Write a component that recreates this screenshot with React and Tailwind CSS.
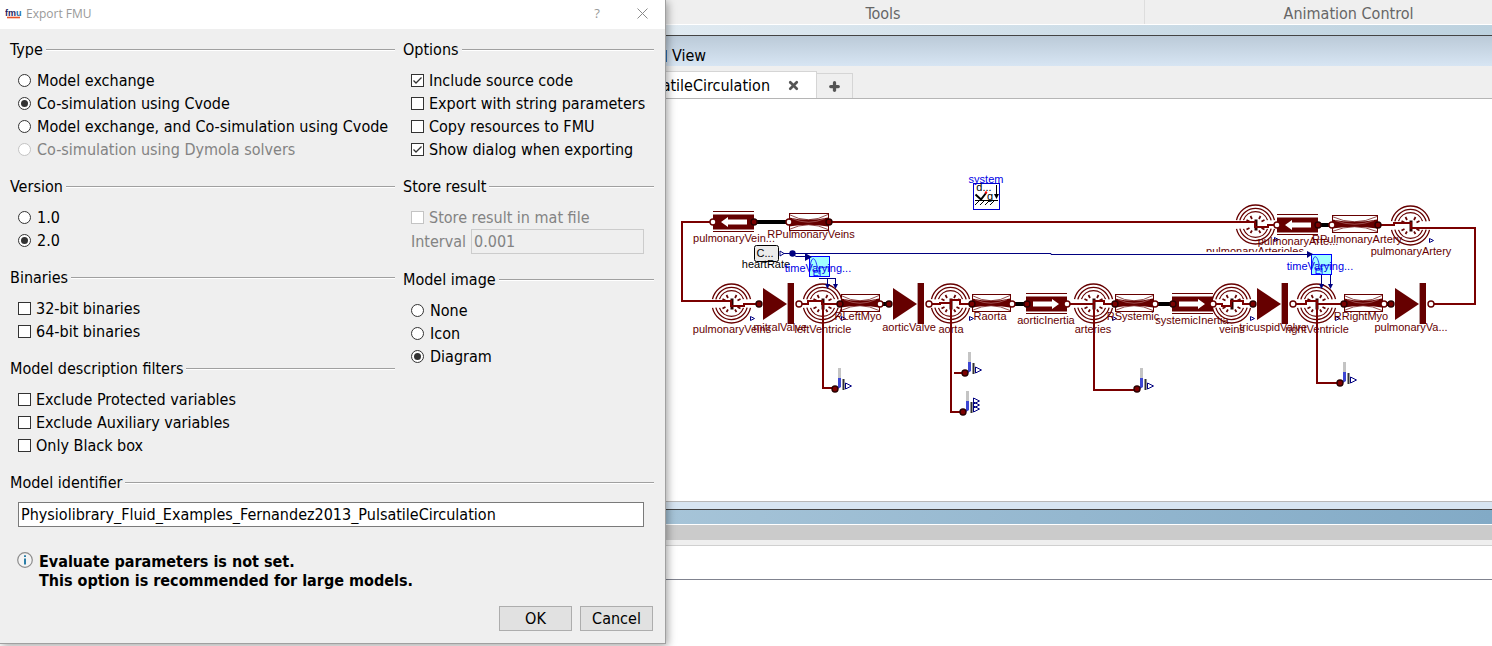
import { useId } from 'react';
import { X, Plus } from 'lucide-react';

const RED = '#660000';
const WIRE = '#7a0000';
const NAVY = '#000080';

/* ---------- dialog controls ---------- */

function Group({ title, children, className = '' }) {
  return (
    <fieldset className={`min-w-0 ${className}`}>
      <legend className="flex w-full items-center gap-[3px] h-[23px]">
        <span>{title}</span>
        <span className="h-[2px] flex-1 border-t border-[#a0a0a0] bg-white" />
      </legend>
      <div className="mt-2 pl-2">{children}</div>
    </fieldset>
  );
}

function Radio({ name, label, checked = false, disabled = false }) {
  const id = useId();
  return (
    <div className="flex h-[23px] items-center gap-[6px]">
      <input
        id={id}
        type="radio"
        name={name}
        defaultChecked={checked}
        disabled={disabled}
        className="flex h-[13px] w-[13px] shrink-0 appearance-none items-center justify-center rounded-full border border-[#333333] bg-white before:h-[7px] before:w-[7px] before:rounded-full checked:before:bg-[#333333] disabled:border-[#c4c4c4]"
      />
      <label htmlFor={id} className={disabled ? 'text-[#838383]' : ''}>{label}</label>
    </div>
  );
}

function CheckBox({ label, checked = false, disabled = false }) {
  const id = useId();
  return (
    <div className="flex h-[23px] items-center gap-[5px]">
      <span className="relative h-[13px] w-[13px] shrink-0">
        <input
          id={id}
          type="checkbox"
          defaultChecked={checked}
          disabled={disabled}
          className="peer block h-[13px] w-[13px] appearance-none border border-[#333333] bg-white disabled:border-[#c4c4c4]"
        />
        <svg viewBox="0 0 13 13" className="pointer-events-none absolute inset-0 hidden peer-checked:block">
          <path d="M2.5 6.5 L5 9 L10.5 3.5" fill="none" stroke="#333333" strokeWidth="1.3" />
        </svg>
      </span>
      <label htmlFor={id} className={disabled ? 'text-[#838383]' : ''}>{label}</label>
    </div>
  );
}

function TitleBar() {
  return (
    <header className="flex h-[29px] items-center bg-white pb-[2px] pl-[5px] font-['Open_Sans',sans-serif] text-[12px] text-[#999999]">
      <svg width="17" height="12" viewBox="0 0 17 12" className="mr-1">
        <text x="0" y="8" fontFamily="Liberation Sans, Arial, sans-serif" fontWeight="bold" fontSize="9" fill="#1f1a5e">
          fm<tspan fill="#1c6ea8">u</tspan>
        </text>
        <path d="M2 9.5 H15" stroke="#e8532a" strokeWidth="1.6" />
      </svg>
      <h1 className="flex-1">Export FMU</h1>
      <button type="button" aria-label="Help" className="w-[46px] text-center text-[13px]">?</button>
      <button type="button" aria-label="Close" className="flex w-[45px] justify-center">
        <svg width="11" height="11" viewBox="0 0 11 11">
          <path d="M0.5 0.5 L10.5 10.5 M10.5 0.5 L0.5 10.5" stroke="#8a8a8a" />
        </svg>
      </button>
    </header>
  );
}

function ExportDialog() {
  return (
    <form
      onSubmit={(e) => e.preventDefault()}
      className="relative z-10 w-[666px] shrink-0 self-start whitespace-nowrap border-r border-b border-[#a0a0a0] bg-[#efefef] shadow-[2px_2px_8px_rgba(0,0,0,0.35)]"
    >
      <TitleBar />
      <div className="pt-[9px] pr-[11px] pb-3 pl-[10px]">
        <div className="flex gap-2">
          <div className="flex w-[385px] shrink-0 flex-col gap-[14px]">
            <Group title="Type">
              <Radio name="type" label="Model exchange" />
              <Radio name="type" label="Co-simulation using Cvode" checked />
              <Radio name="type" label="Model exchange, and Co-simulation using Cvode" />
              <Radio name="type" label="Co-simulation using Dymola solvers" disabled />
            </Group>
            <Group title="Version">
              <Radio name="version" label="1.0" />
              <Radio name="version" label="2.0" checked />
            </Group>
            <Group title="Binaries">
              <CheckBox label="32-bit binaries" />
              <CheckBox label="64-bit binaries" />
            </Group>
            <Group title="Model description filters">
              <CheckBox label="Exclude Protected variables" />
              <CheckBox label="Exclude Auxiliary variables" />
              <CheckBox label="Only Black box" />
            </Group>
          </div>
          <div className="flex min-w-0 flex-1 flex-col gap-[14px]">
            <Group title="Options">
              <CheckBox label="Include source code" checked />
              <CheckBox label="Export with string parameters" />
              <CheckBox label="Copy resources to FMU" />
              <CheckBox label="Show dialog when exporting" checked />
            </Group>
            <Group title="Store result">
              <CheckBox label="Store result in mat file" disabled />
              <div className="mr-[10px] flex items-center text-[#838383]">
                <label htmlFor="interval" className="w-[60px]">Interval</label>
                <input
                  id="interval"
                  disabled
                  defaultValue="0.001"
                  className="h-[25px] min-w-0 flex-1 border border-[#cccccc] px-[2px]"
                />
              </div>
            </Group>
            <Group title="Model image">
              <Radio name="image" label="None" />
              <Radio name="image" label="Icon" />
              <Radio name="image" label="Diagram" checked />
            </Group>
          </div>
        </div>

        <Group title="Model identifier" className="mt-[14px]">
          <div className="pr-[10px]">
            <input
              aria-label="Model identifier"
              defaultValue="Physiolibrary_Fluid_Examples_Fernandez2013_PulsatileCirculation"
              className="block h-[25px] w-full border border-[#7a7a7a] bg-white px-[2px]"
            />
          </div>
        </Group>

        <div className="mt-[25px] flex gap-[6px] pl-[7px]">
          <svg width="16" height="16" viewBox="0 0 16 16" className="shrink-0">
            <circle cx="8" cy="8" r="7.3" fill="#f4f4f4" stroke="#8c8c8c" strokeWidth="1.2" />
            <path d="M7 3.2 H9 V5 H7 Z M7 6.5 H9 V12.5 H7 Z" fill="#2b7fa8" />
          </svg>
          <p className="font-bold leading-[19px]">
            Evaluate parameters is not set.
            <br />
            This option is recommended for large models.
          </p>
        </div>

        <div className="mt-4 flex justify-end gap-2 pr-px">
          <button type="submit" className="h-[25px] w-[73px] border border-[#adadad] bg-[#e1e1e1]">OK</button>
          <button type="button" className="h-[25px] w-[73px] border border-[#adadad] bg-[#e1e1e1]">Cancel</button>
        </div>
      </div>
    </form>
  );
}

/* ---------- diagram symbols ---------- */

function Port({ x, y, solid = false }) {
  return (
    <circle cx={x} cy={y} r="3" fill={solid ? '#7d0000' : '#ffffff'} stroke={solid ? '#2a0000' : RED} strokeWidth="1.4" />
  );
}

function Chamber({ x, y }) {
  // top and bottom halves of the concentric shells
  const shells = [[19.5, 13], [16.2, 15], [12.8, 20]];
  return (
    <g transform={`translate(${x + 0.5} ${y + 0.5})`} fill="none" stroke={RED}>
      {shells.map(([r, a]) => {
        const dx = r * Math.cos((a * Math.PI) / 180);
        const dy = r * Math.sin((a * Math.PI) / 180);
        return (
          <path
            key={r}
            strokeWidth="1.3"
            d={`M${-dx} ${-dy} A${r} ${r} 0 0 1 ${dx} ${-dy} M${-dx} ${dy} A${r} ${r} 0 0 0 ${dx} ${dy}`}
          />
        );
      })}
      <path strokeWidth="1.7" d="M-9 -4.5 L-6 -3 M-5 -8.5 L-3.5 -5.5 M5 -8.5 L3.5 -5.5 M9 -4.5 L6 -3 M-9 5 L-6 3.5 M-5 8.5 L-3.5 6 M5 8.5 L3.5 6 M9 5 L6 3.5" />
      <path stroke="#2a0000" strokeWidth="3" d="M0.5 -5 V6" />
      <path stroke={NAVY} d="M19 13 L23 15 L19 17 Z" />
    </g>
  );
}

function Resistor({ x, y, w = 38 }) {
  const m = w / 2;
  return (
    <g transform={`translate(${x} ${y})`} fill="none" stroke={RED}>
      <rect x="0.5" y="-8.5" width={w} height="17" fill="#ffffff" />
      <path fill={RED} stroke="none" d={`M0 -4.5 Q${m} 0 ${w} -4.5 V4.5 Q${m} 1 0 4.5 Z`} />
      <path strokeWidth="0.7" d={`M0 -7.5 Q${m} 3 ${w} -7.5 M0 7.5 Q${m} -2 ${w} 7.5`} />
      <path stroke="#c08080" strokeWidth="0.6" d={`M3 -3.5 Q${m} 4 ${w - 3} -3.5`} />
    </g>
  );
}

function Inertia({ x, y, left = false }) {
  return (
    <g transform={`translate(${x} ${y})`}>
      <path d="M0 -10.5 H41 M0 9.5 H41" stroke={RED} />
      <rect x="0" y="-7.5" width="41" height="15" fill={RED} />
      <path
        fill="#ffffff"
        d={left ? 'M8 0 L15 -5 V-2.5 H34 V2.5 H15 V5 Z' : 'M33 0 L26 -5 V-2.5 H7 V2.5 H26 V5 Z'}
      />
    </g>
  );
}

function Valve({ x }) {
  return (
    <g transform={`translate(${x} 304)`} fill={RED}>
      <path d="M0 -16 L24 0 L0 16 Z" />
      <rect x="24" y="-21" width="1" height="41" fill="#b89a9a" />
      <rect x="25" y="-21" width="6" height="41" />
    </g>
  );
}

function Sensor({ x, y, outputs = [-3] }) {
  return (
    <g transform={`translate(${x} ${y})`}>
      <rect x="3" y="-21" width="3" height="11" fill="#c4c4c4" />
      <path d="M3 -11 H6 V-2 L3 0 Z" fill="#3c46d2" />
      <path d="M8.5 -10 V1" fill="none" stroke="#333333" strokeWidth="2" />
      {outputs.map((o) => (
        <path key={o} d={`M10.5 ${o - 3} L16.5 ${o} L10.5 ${o + 3} Z`} fill="none" stroke={NAVY} />
      ))}
      <Port x={0} y={0} solid />
    </g>
  );
}

function TimeVarying({ x, y }) {
  return (
    <g transform={`translate(${x} ${y})`} fill="none" stroke="#0000ff">
      <rect x="0.5" y="-0.5" width="20" height="20" fill="#a0ffff" />
      <path strokeWidth="0.8" d="M1 11 C2 -1 6 -1 8 9 C9 13 12 10 19 10 M10 11 V17" />
      <text x="8" y="19" fontSize="9" fill="#0000ff" stroke="none">EI</text>
    </g>
  );
}

const wires = [
  'M713 222 H682 V301 H731 V306 H744 V304 H759',
  'M829 222 H1255 V227 H1268 V225 H1277',
  'M799 304 H808 V301 H822 V304 H840',
  'M823 304 V388 H835',
  'M929 304 H940 V303 H951 V300 H960 V304 H972',
  'M951 304 V412 H963',
  'M954 373 H965',
  'M1067 304 H1094 V301 H1104 V304 H1115',
  'M1094 304 V390 H1137',
  'M1213 304 H1222 V306 H1231 V301 H1243 V304 H1253',
  'M1293 304 H1306 V301 H1317 V304 H1344',
  'M1317 304 V383 H1340',
  'M1378 225 H1394 V223 H1411 V228 H1475 V304 H1431',
];

const chambers = [[731, 303], [822, 303], [950, 303], [1093, 303], [1231, 303], [1316, 303], [1255, 224], [1410, 225]];

const openPorts = [[713, 222], [789, 222], [799, 304], [880, 304], [929, 304], [1012, 304], [1067, 304], [1155, 304], [1213, 304], [1293, 304], [1384, 304], [1431, 304], [1277, 225], [1332, 225]];
const solidPorts = [[754, 222], [829, 222], [759, 304], [840, 304], [889, 304], [972, 304], [1027, 304], [1115, 304], [1173, 304], [1253, 304], [1344, 304], [1391, 304], [1318, 225], [1378, 225]];

const labels = [
  ['pulmonaryVein...', 734, 242],
  ['RPulmonaryVeins', 811, 238],
  ['pulmonaryVeins', 732, 333],
  ['mitralValve', 780, 331],
  ['leftVentricle', 823, 333],
  ['RLeftMyo', 858, 320],
  ['aorticValve', 909, 331],
  ['aorta', 951, 333],
  ['Raorta', 990, 320],
  ['aorticInertia', 1046, 324],
  ['arteries', 1093, 333],
  ['RSystemic', 1133, 320],
  ['systemicInertia', 1192, 324],
  ['veins', 1232, 333],
  ['tricuspidValve', 1273, 331],
  ['rightVentricle', 1317, 333],
  ['RRightMyo', 1361, 320],
  ['pulmonaryVa...', 1411, 331],
  ['pulmonaryArtery', 1411, 255],
  ['RPulmonaryArtery', 1357, 243],
  ['pulmonaryArte...', 1298, 245],
];

function Diagram() {
  return (
    <svg
      viewBox="666 99 826 402"
      preserveAspectRatio="xMinYMin meet"
      className="block w-full"
      fontFamily="Liberation Sans, Arial, sans-serif"
      fontSize="11"
      textAnchor="middle"
    >
      <clipPath id="cut">
        <rect x="1200" y="240" width="110" height="12" />
      </clipPath>

      {chambers.map(([x, y]) => <Chamber key={`${x}-${y}`} x={x} y={y} />)}
      <path d={wires.join(' ')} fill="none" stroke={WIRE} strokeWidth="2" />
      <path
        d="M754 222 H789 M880 304 H889 M1012 304 H1027 M1155 304 H1173 M1384 304 H1391 M1318 225 H1332"
        stroke="#000000"
        strokeWidth="4"
      />

      <Inertia x={713} y={222} left />
      <Inertia x={1277} y={225} left />
      <Inertia x={1026} y={304} />
      <Inertia x={1172} y={304} />
      <Resistor x={789} y={222} w={39} />
      <Resistor x={841} y={303} />
      <Resistor x={972} y={303} />
      <Resistor x={1115} y={303} />
      <Resistor x={1344} y={303} />
      <Resistor x={1332} y={224} w={45} />
      {[763, 893, 1257, 1395].map((x) => <Valve key={x} x={x} />)}

      {openPorts.map(([x, y]) => <Port key={`${x}-${y}`} x={x} y={y} />)}
      {solidPorts.map(([x, y]) => <Port key={`${x}-${y}`} x={x} y={y} solid />)}

      <Sensor x={835} y={389} />
      <Sensor x={965} y={373} />
      <Sensor x={963} y={412} outputs={[-11, -7, -3]} />
      <Sensor x={1137} y={389} />
      <Sensor x={1340} y={383} />

      {/* heart rate signal */}
      <path d="M784 253.5 H1051 V254.5 H1307 M792 253.5 L796 256.5 H807" fill="none" stroke={NAVY} />
      <TimeVarying x={809} y={257} />
      <TimeVarying x={1311} y={255} />
      <path d="M819 278.5 H835 M827.5 278 V284 M835.5 278 V284 M1321.5 275 V285 M1330.5 275 V285" stroke={NAVY} fill="none" />
      <path
        d="M805 253 L812 257 L805 261 Z M1307 251 L1313 254 L1307 258 Z M825 284 H830 L827.5 289 Z M833 284 H838 L835.5 289 Z M1319 284 H1324 L1321.5 289 Z M1328 284 H1333 L1330.5 289 Z"
        fill={NAVY}
      />
      <rect x="754.5" y="245.5" width="24" height="16" rx="2" fill="#ebebeb" stroke="#000000" />
      <path d="M780 251 L784 253.5 L780 256 Z" fill="none" stroke={NAVY} />
      <circle cx="792.5" cy="253.5" r="3.2" fill={NAVY} />
      <text x="765" y="257">C...</text>
      <text x="766" y="268">heartRate</text>
      <g fill="#0000e6">
        <text x="818" y="272">timeVarying...</text>
        <text x="1320" y="270">timeVarying...</text>
        <text x="986" y="183">system</text>
      </g>

      <g fill={RED}>
        {labels.map(([text, x, y]) => <text key={text} x={x} y={y}>{text}</text>)}
        <text x="1255" y="255" clipPath="url(#cut)">pulmonaryArterioles</text>
      </g>

      {/* system block */}
      <rect x="973.5" y="183.5" width="26" height="26" fill="none" stroke="#0000d0" />
      <text x="984" y="191">d...</text>
      <text x="990" y="200">g</text>
      <path d="M975.5 194.5 L981 199.5 L986 193" fill="none" stroke="#000000" strokeWidth="2" />
      <path d="M975 200.5 H998 M975 205 L979 201 M980 205 L984 201 M985 205 L989 201 M990 205 L994 201 M996.5 185 V197" stroke="#000000" fill="none" />
      <path d="M994 194 H999 L996.5 199 Z" />
      <circle cx="986" cy="192.5" r="1.2" fill="#ff0000" />
    </svg>
  );
}

function Workspace() {
  return (
    <main className="flex min-w-0 flex-1 flex-col overflow-hidden bg-white">
      <div className="flex h-[25px] border-b border-white bg-[#efefef] text-[#666666]">
        <div className="flex flex-[0_0_58%] items-center justify-center border-r border-[#dddddd] pt-[3px] pr-11">Tools</div>
        <div className="flex flex-1 items-center justify-center pt-[3px] pl-[60px]">Animation Control</div>
      </div>
      <div className="h-[10px] bg-linear-to-r from-[#e0eaf1] to-[#bdd2df]" />
      <div className="flex h-[31px] items-center border-t border-[#444444] bg-linear-to-b from-[#bbcad8] to-[#d7e5f3] pt-[9px]">
        <span className="h-3 w-px bg-[#2d6fb5]" />
        <button type="button" className="px-[5px]">View</button>
      </div>
      <div className="flex h-[33px] items-end border-b border-[#b5b5b5] bg-[#efefef]">
        <div className="flex h-[27px] w-[151px] items-center justify-between overflow-hidden border-t border-r border-[#d5d5d5] bg-white pr-4">
          <span className="flex w-[104px] justify-end">PulsatileCirculation</span>
          <button type="button" aria-label="Close tab">
            <X size={13} strokeWidth={5} color="#555555" />
          </button>
        </div>
        <button type="button" aria-label="New tab" className="flex h-[25px] w-9 items-center justify-center border-t border-r border-[#d5d5d5]">
          <Plus size={13} strokeWidth={6} color="#555555" />
        </button>
      </div>
      <Diagram />
      <div className="h-2 shrink-0 border-t border-[#b8b8b8] bg-[#d7e5f2]" />
      <div className="h-4 shrink-0 border-t border-b border-t-[#444444] border-b-white bg-linear-to-r from-[#a6c4d8] to-[#82aac6]" />
      <div className="h-[15px] shrink-0 bg-[#cbcbcb]" />
      <div className="h-[6px] shrink-0 border-b border-[#d0d0d0] bg-[#efefef]" />
      <div className="h-[34px] shrink-0 border-b border-[#80838f]" />
    </main>
  );
}

export default function App() {
  return (
    <div className="flex min-h-screen bg-white font-['DejaVu_Sans_Condensed','DejaVu_Sans',sans-serif] text-[16px] leading-[19px] text-black">
      <ExportDialog />
      <Workspace />
    </div>
  );
}
